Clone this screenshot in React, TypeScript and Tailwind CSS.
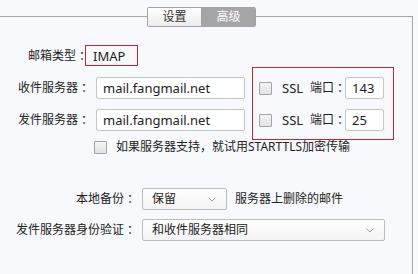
import React from 'react';

const font = { fontFamily: '"Noto Sans", "Noto Sans CJK SC", sans-serif' };
const colonFont = { fontFamily: '"Noto Sans CJK TC", sans-serif' };

const Colon = () => (
  <span className="w-[12px] text-center" style={colonFont}>：</span>
);

const Label = ({ text, width }: { text: string; width: string }) => (
  <span className={`${width} flex justify-end`}>
    <span>{text}</span>
    <Colon />
  </span>
);

const Checkbox = () => (
  <span className="inline-block w-[13px] h-[13px] shrink-0 border border-[#a3a3a3] bg-gradient-to-b from-[#f4f4f4] to-[#e2e2e2] rounded-[1px]" />
);

const TextInput = ({ value, width }: { value: string; width: string }) => (
  <div className={`${width} h-[22px] bg-white border border-[#c6c6c6] rounded-[2px] flex items-center pl-[6px] text-[13px] text-[#222]`}>
    {value}
  </div>
);

const Chevron = () => (
  <svg width="8" height="5" viewBox="0 0 8 5" className="shrink-0">
    <path d="M0.5 0.5 L4 4 L7.5 0.5" fill="none" stroke="#a0a0a0" strokeWidth="1" />
  </svg>
);

const Select = ({ value, width }: { value: string; width: string }) => (
  <div className={`${width} h-[22px] bg-gradient-to-b from-white to-[#f3f3f3] border border-[#bdbdbd] rounded-[2px] flex items-center justify-between pl-[9px] pr-[10px] text-[12px] text-[#222]`}>
    <span>{value}</span>
    <Chevron />
  </div>
);

export default function App() {
  return (
    <div className="w-[418px] h-[274px] bg-[#f8f9fc] text-[#222] overflow-hidden" style={font}>
      <div className="w-[413px] h-full flex flex-col">
        {/* tab header */}
        <div className="flex pt-[7px]">
          <div className="w-[147px] mt-[9px] border-t border-[#a6a6a6]" />
          <div className="flex h-[20px] border border-[#a3a3a3] rounded-[2px] text-[12px] overflow-hidden">
            <div className="w-[53px] flex items-center justify-center bg-gradient-to-b from-white to-[#ececec] text-[#333]">设置</div>
            <div className="w-[54px] flex items-center justify-center bg-[#a5a5a5] text-white border-l border-[#a3a3a3]">高级</div>
          </div>
          <div className="flex-1 mt-[9px] border-t border-r border-[#a6a6a6]" />
        </div>

        {/* panel */}
        <div className="flex-1 border-r border-[#a6a6a6] flex flex-col text-[12px] leading-[18px]">
          <div className="flex items-center mt-[18px]">
            <Label text="邮箱类型" width="w-[88px]" />
            <div className="-ml-[3px] w-[53px] h-[21px] border border-[#c8262c] flex items-center pl-[7px] text-[13px]">IMAP</div>
          </div>

          <div className="flex items-start mt-[1px]">
            <div className="flex flex-col gap-[10px] mt-[10px]">
              <div className="flex items-center">
                <Label text="收件服务器" width="w-[90px]" />
                <div className="ml-[6px]"><TextInput value="mail.fangmail.net" width="w-[149px]" /></div>
              </div>
              <div className="flex items-center">
                <Label text="发件服务器" width="w-[90px]" />
                <div className="ml-[6px]"><TextInput value="mail.fangmail.net" width="w-[149px]" /></div>
              </div>
            </div>
            <div className="ml-[7px] w-[142px] h-[73px] border border-[#c8262c] flex flex-col gap-[10px] pt-[9px] pl-[6px]">
              {['143', '25'].map((port) => (
                <div key={port} className="flex items-center">
                  <Checkbox />
                  <span className="ml-[10px] text-[13px]">SSL</span>
                  <span className="ml-[7px] flex">
                    <span>端口</span>
                    <Colon />
                  </span>
                  <div className="ml-[-1px]"><TextInput value={port} width="w-[39px]" /></div>
                </div>
              ))}
            </div>
          </div>

          <div className="flex items-center mt-[-2px] ml-[94px]">
            <Checkbox />
            <span className="ml-[9px]">如果服务器支持，就试用STARTTLS加密传输</span>
          </div>

          <div className="flex items-center mt-[32px]">
            <Label text="本地备份" width="w-[136px]" />
            <div className="ml-[6px]"><Select value="保留" width="w-[85px]" /></div>
            <span className="ml-[8px]">服务器上删除的邮件</span>
          </div>

          <div className="flex items-center mt-[9px]">
            <Label text="发件服务器身份验证" width="w-[136px]" />
            <div className="ml-[6px]"><Select value="和收件服务器相同" width="w-[243px]" /></div>
          </div>
        </div>
      </div>
    </div>
  );
}
